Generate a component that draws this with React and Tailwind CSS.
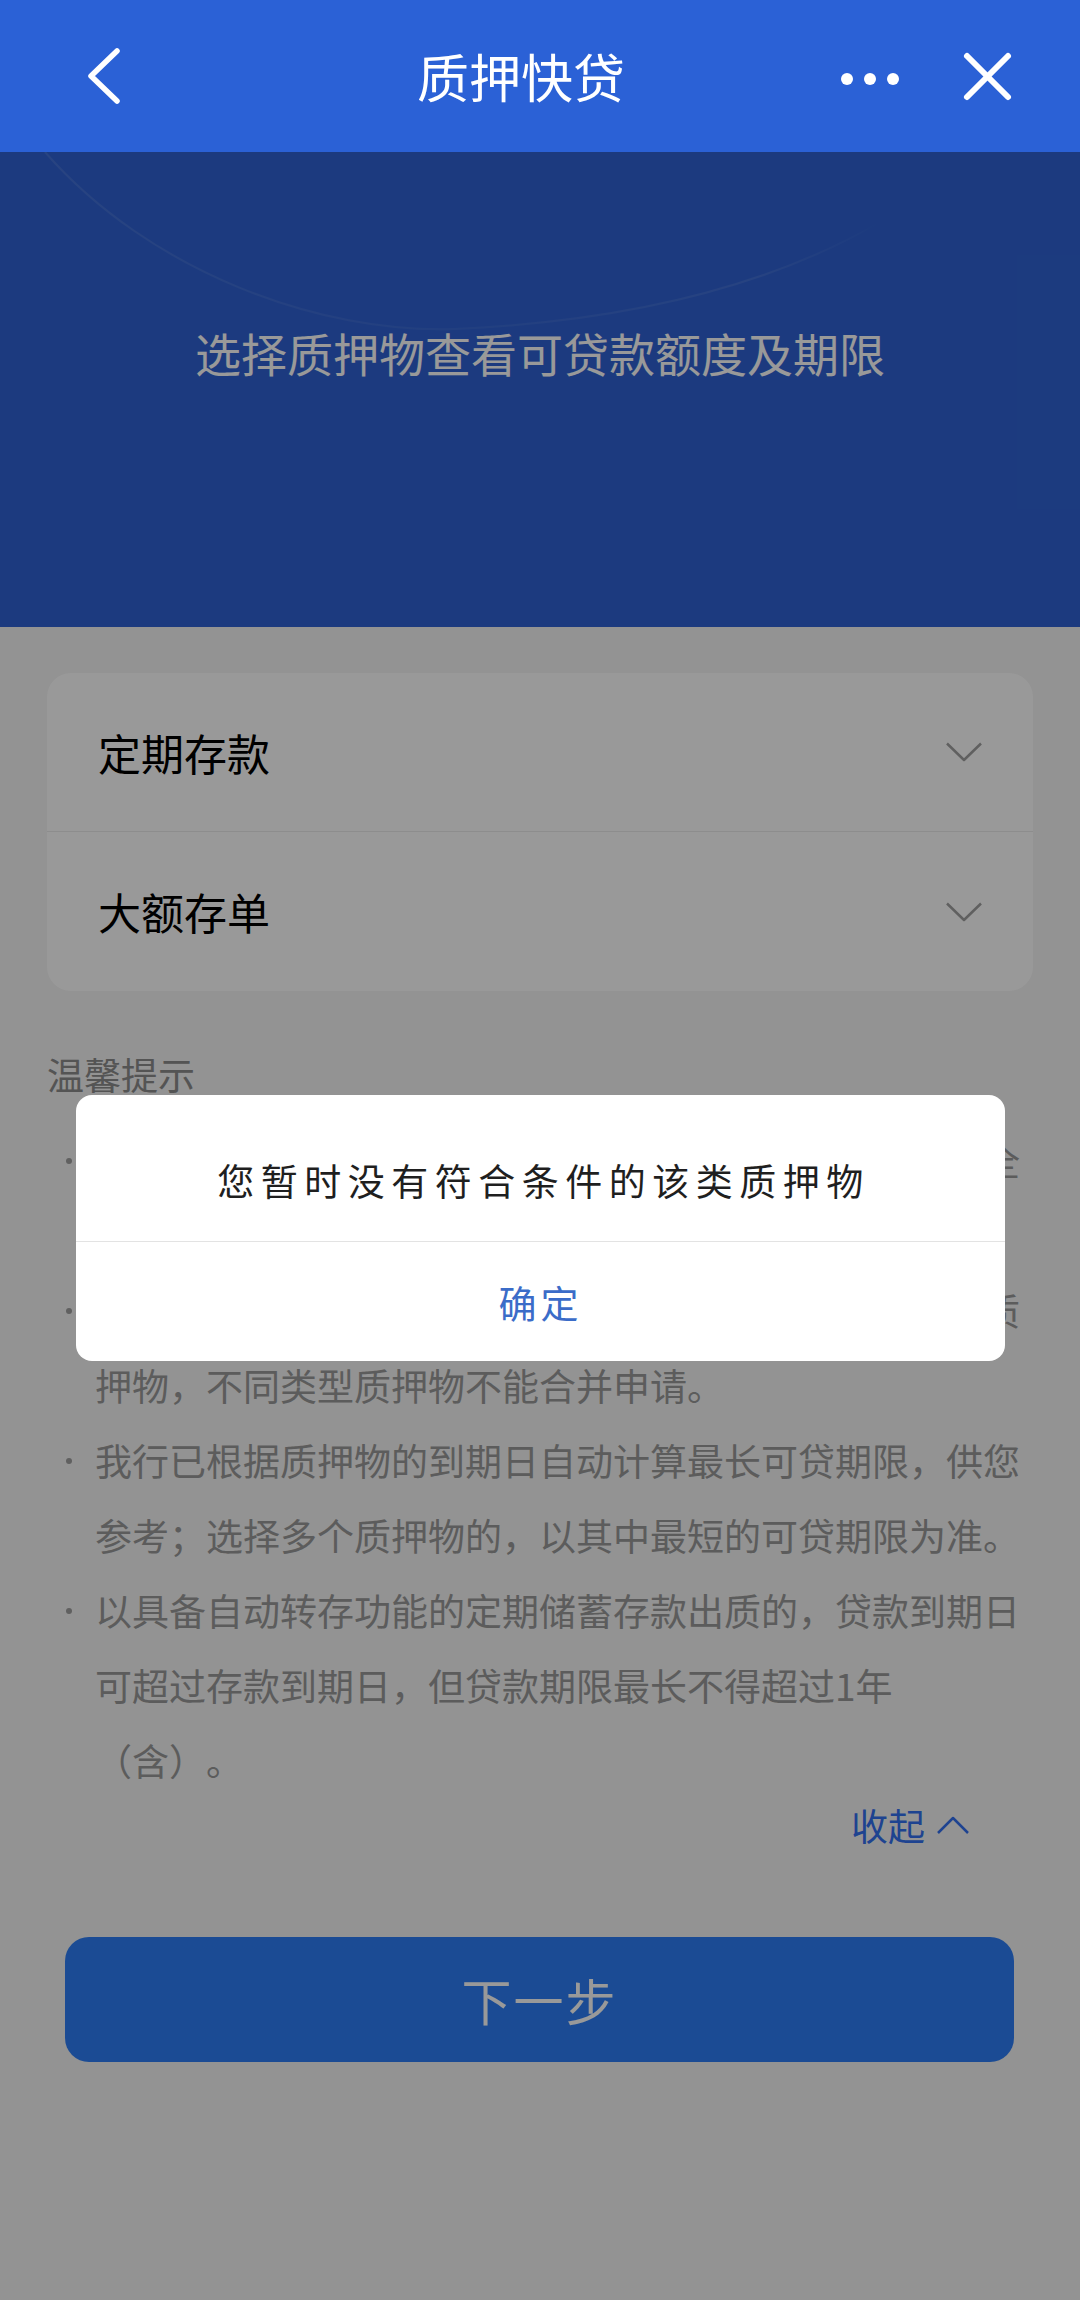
import React from 'react';

const tips = [
  '本业务支持本人名下的定期存款、大额存单作为质押，全部或部分质押均可办理，质押期间存款将被冻结。',
  '每次贷款申请时，仅可选择同一类型项下的一个或多个质押物，不同类型质押物不能合并申请。',
  '我行已根据质押物的到期日自动计算最长可贷期限，供您参考；选择多个质押物的，以其中最短的可贷期限为准。',
  '以具备自动转存功能的定期储蓄存款出质的，贷款到期日可超过存款到期日，但贷款期限最长不得超过1年（含）。',
];

function ChevronDown() {
  return (
    <svg width="36" height="20" viewBox="0 0 36 20" fill="none">
      <polyline points="1,1.5 18,18 35,1.5" stroke="#a0a0a0" strokeWidth="2.5" strokeLinejoin="round" />
    </svg>
  );
}

function PledgeRow({ label, last }) {
  return (
    <div className={`h-[159px] flex items-center justify-between pl-[51px] pr-[51px] ${last ? '' : 'border-b border-[#ebebeb]'}`}>
      <span className="text-[43px] text-black leading-none">{label}</span>
      <ChevronDown />
    </div>
  );
}

export default function App() {
  return (
    <div className="relative w-[1080px] h-[2300px] overflow-hidden bg-[#f5f5f5] font-['Noto_Sans_CJK_SC',sans-serif]">
      {/* nav bar */}
      <div className="relative z-20 h-[152px] bg-[#2b61d6] flex items-center">
        <div className="w-[240px] flex items-center">
          <svg className="ml-[84px]" width="40" height="62" viewBox="0 0 40 62" fill="none">
            <polyline points="33,6 7,31 33,56" stroke="white" strokeWidth="5.5" strokeLinecap="round" strokeLinejoin="round" />
          </svg>
        </div>
        <div className="flex-1 text-center pr-[38px] text-[52px] font-normal text-white leading-none">质押快贷</div>
        <div className="w-[240px] flex items-center">
          <svg className="mt-[6px]" width="64" height="24" viewBox="0 0 64 24">
            <circle cx="7" cy="12" r="6" fill="white" />
            <circle cx="30" cy="12" r="6" fill="white" />
            <circle cx="53" cy="12" r="6" fill="white" />
          </svg>
          <svg className="ml-[56px]" width="55" height="55" viewBox="0 0 55 55" fill="none">
            <line x1="7" y1="7" x2="48" y2="48" stroke="white" strokeWidth="6" strokeLinecap="round" />
            <line x1="48" y1="7" x2="7" y2="48" stroke="white" strokeWidth="6" strokeLinecap="round" />
          </svg>
        </div>
      </div>

      {/* hero */}
      <div className="relative h-[475px] bg-[#2f62d4] overflow-hidden">
        <svg className="absolute inset-0" width="1080" height="475" viewBox="0 0 1080 475" fill="none">
          <defs>
            <linearGradient id="arc" x1="0" y1="0" x2="1" y2="0">
              <stop offset="0" stopColor="white" stopOpacity="0.1" />
              <stop offset="0.5" stopColor="white" stopOpacity="0.05" />
              <stop offset="0.85" stopColor="white" stopOpacity="0.09" />
              <stop offset="1" stopColor="white" stopOpacity="0" />
            </linearGradient>
          </defs>
          <path d="M45 0 C 150 120, 320 182, 455 177 C 610 170, 760 140, 880 70" stroke="url(#arc)" strokeWidth="2" />
        </svg>
        <p className="relative pt-[171px] text-center text-[46px] leading-[58px] text-white">选择质押物查看可贷款额度及期限</p>
      </div>

      {/* content */}
      <div className="px-[47px] pt-[46px]">
        <div className="bg-white rounded-[24px] overflow-hidden">
          <PledgeRow label="定期存款" />
          <PledgeRow label="大额存单" last />
        </div>

        <div className="mt-[46px] text-[37px] leading-[75px] text-[#8c8c8c]">温馨提示</div>
        <ul className="mt-[11px]">
          {tips.map((t) => (
            <li key={t} className="flex">
              <div className="w-[48px] h-[75px] shrink-0 flex items-center">
                <span className="ml-[19px] w-[6px] h-[6px] rounded-full bg-[#a0a0a0]" />
              </div>
              <p className="flex-1 pr-[4px] text-[37px] leading-[75px] text-[#999999] [text-spacing-trim:space-all]">{t}</p>
            </li>
          ))}
        </ul>
        <div className="mt-[2px] h-[50px] flex items-center justify-end pr-[63px] text-[#3370f0]">
          <span className="text-[37px] leading-none">收起</span>
          <svg className="ml-[11px]" width="34" height="20" viewBox="0 0 34 20" fill="none">
            <polyline points="2,18 17,3 32,18" stroke="#3370f0" strokeWidth="2.5" strokeLinejoin="round" />
          </svg>
        </div>

        <button className="mt-[87px] mx-[18px] w-[949px] h-[125px] rounded-[24px] bg-[#2d7ef7] text-white text-[50px] tracking-[2px]">
          下一步
        </button>
      </div>

      {/* mask + dialog */}
      <div className="absolute inset-x-0 top-[152px] bottom-0 z-10 bg-black/40" />
      <div className="absolute z-20 left-[76px] top-[1095px] w-[929px] bg-white rounded-[16px] overflow-hidden">
        <div className="h-[147px] pt-[60px] pl-[6px] text-center text-[37px] leading-[50px] tracking-[6.5px] text-[#1f1f1f] border-b border-[#e3e3e3]">
          您暂时没有符合条件的该类质押物
        </div>
        <div className="h-[119px] flex items-center justify-center text-[38px] tracking-[4px] text-[#3b6cc8]">确定</div>
      </div>
    </div>
  );
}
